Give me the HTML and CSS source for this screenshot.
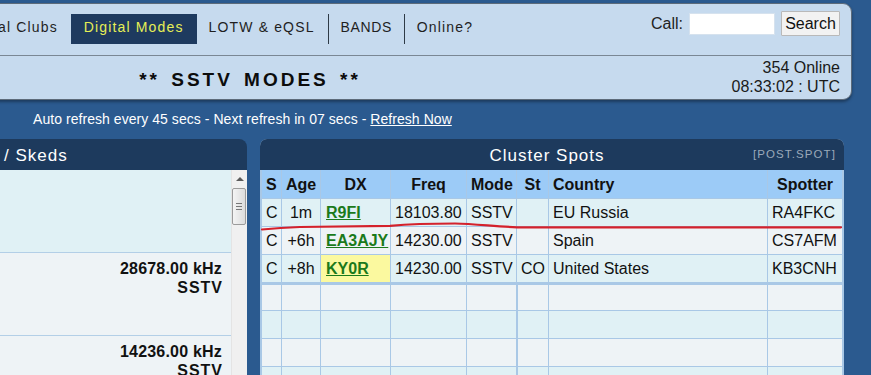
FILE: index.html
```html
<!DOCTYPE html>
<html>
<head>
<meta charset="utf-8">
<link rel="stylesheet" href="styles.css">
</head>
<body>
<div class="page">
  <div class="header">
    <div class="navrow">
      <ul class="nav">
        <li class="item">Local Clubs</li>
        <li class="item active">Digital Modes</li>
        <li class="item">LOTW &amp; eQSL</li>
        <li class="item sep bands">BANDS</li>
        <li class="item sep">Online?</li>
      </ul>
      <form class="search">
        <label class="call">Call:</label>
        <input class="callbox" type="text">
        <button class="btn" type="button">Search</button>
      </form>
    </div>
    <div class="inforow">
      <div class="title">** SSTV MODES **</div>
      <div class="status">
        <div>354 Online</div>
        <div>08:33:02 : UTC</div>
      </div>
    </div>
  </div>

  <div class="refresh">Auto refresh every 45 secs - Next refresh in 07 secs - <a class="reflink" href="#">Refresh Now</a></div>

  <div class="panels">
    <div class="panel left">
      <div class="phead lefthead">/ Skeds</div>
      <div class="lbody">
        <div class="lrows">
          <div class="lrow cyan"></div>
          <div class="lrow grey"><div class="freq">28678.00 kHz</div><div class="mode">SSTV</div></div>
          <div class="lrow grey"><div class="freq">14236.00 kHz</div><div class="mode">SSTV</div></div>
        </div>
        <div class="scrollbar">
          <div class="arrow"></div>
          <div class="thumb"><span></span><span></span><span></span></div>
        </div>
      </div>
    </div>

    <div class="panel right">
      <div class="phead righthead">
        <span></span>
        <span class="ptitle">Cluster Spots</span>
        <span class="post">[POST.SPOT]</span>
      </div>
      <table class="spots">
        <colgroup>
          <col class="c-s"><col class="c-age"><col class="c-dx"><col class="c-freq"><col class="c-mode"><col class="c-st"><col class="c-country"><col class="c-spotter">
        </colgroup>
        <thead>
          <tr><th class="l">S</th><th>Age</th><th>DX</th><th>Freq</th><th>Mode</th><th>St</th><th class="l">Country</th><th>Spotter</th></tr>
        </thead>
        <tbody>
          <tr class="cyan"><td>C</td><td class="c">1m</td><td><a class="dx" href="#">R9FI</a></td><td>18103.80</td><td>SSTV</td><td></td><td>EU Russia</td><td>RA4FKC</td></tr>
          <tr class="grey"><td>C</td><td class="c">+6h</td><td><a class="dx" href="#">EA3AJY</a></td><td>14230.00</td><td>SSTV</td><td></td><td>Spain</td><td>CS7AFM</td></tr>
          <tr class="cyan"><td>C</td><td class="c">+8h</td><td class="hl"><a class="dx" href="#">KY0R</a></td><td>14230.00</td><td>SSTV</td><td>CO</td><td>United States</td><td>KB3CNH</td></tr>
          <tr class="grey empty first"><td></td><td></td><td></td><td></td><td></td><td class="thick"></td><td></td><td></td></tr>
          <tr class="cyan empty"><td></td><td></td><td></td><td></td><td></td><td class="thick"></td><td></td><td></td></tr>
          <tr class="grey empty"><td></td><td></td><td></td><td></td><td></td><td class="thick"></td><td></td><td></td></tr>
          <tr class="cyan empty"><td></td><td></td><td></td><td></td><td></td><td class="thick"></td><td></td><td></td></tr>
        </tbody>
      </table>
    </div>
  </div>

  <svg class="annot" width="871" height="375" viewBox="0 0 871 375">
    <path d="M262,229.5 Q280,227.6 300,227 L390,225.8 C405,224.5 430,223.5 455,223.5 C475,223.8 495,226.5 517,227.3 L841,227.3" fill="none" stroke="#d4212b" stroke-width="2.2" stroke-linecap="round"/>
  </svg>
</div>
</body>
</html>
```

FILE: styles.css
```css
* { box-sizing: border-box; }
html, body { margin: 0; padding: 0; }
body {
  background: #2b5a8f;
  font-family: "Liberation Sans", Arial, sans-serif;
  width: 871px;
  height: 375px;
  overflow: hidden;
}
.page { position: relative; width: 871px; height: 375px; padding-top: 3px; }

.header {
  margin-left: -45px;
  width: 897px;
  height: 97px;
  background: #c6daee;
  border: 1px solid #5d6b7a;
  border-radius: 0 9px 9px 0;
  box-shadow: 0 2px 3px rgba(0,0,0,0.35);
}
.navrow {
  display: flex;
  height: 52px;
  border-bottom: 1px solid #7a8794;
}
.nav {
  list-style: none;
  margin: 0;
  padding: 10px 0 0 4px;
  display: flex;
  align-items: flex-start;
}
.item {
  height: 30px;
  line-height: 27px;
  padding: 0 13px 0 12px;
  font-size: 14px;
  letter-spacing: 1.15px;
  color: #1f1f1f;
}
.item.active {
  background: #1e3a5f;
  color: #e6ef55;
  padding: 0 13px;
}
.item.sep { border-left: 1px solid #2e3a46; }
.item.bands { letter-spacing: 0.6px; padding-right: 12px; }

.search {
  margin: 0 0 0 auto;
  padding: 7px 11px 0 0;
  display: flex;
  align-items: flex-start;
}
.call {
  font-size: 16px;
  color: #222;
  line-height: 19px;
  margin-top: 3px;
  margin-right: 6px;
}
.callbox {
  width: 86px;
  height: 22px;
  margin: 2px 6px 0 0;
  border: 1px solid #d6e2ee;
  background: #fff;
  padding: 0;
}
.btn {
  width: 59px;
  height: 25px;
  margin: 0;
  padding: 0;
  font-family: "Liberation Sans", Arial, sans-serif;
  font-size: 16px;
  color: #111;
  background: #f2f2f2;
  border: 1px solid #b9b9b9;
  border-radius: 1px;
}

.inforow {
  display: flex;
  height: 43px;
}
.title {
  width: 588px;
  text-align: center;
  font-weight: bold;
  font-size: 19px;
  letter-spacing: 3px;
  word-spacing: 3px;
  color: #0c0c0c;
  padding-top: 13px;
}
.status {
  margin-left: auto;
  padding: 2px 11px 0 0;
  text-align: right;
  font-size: 16px;
  line-height: 19px;
  color: #1a1a1a;
}

.refresh {
  height: 39px;
  line-height: 39px;
  padding-left: 33px;
  font-size: 14px;
  letter-spacing: 0.05px;
  color: #fff;
}
.reflink { color: #fff; text-decoration: underline; }

.panels {
  display: flex;
  gap: 13px;
  align-items: flex-start;
}
.panel { overflow: hidden; }
.left {
  width: 247px;
  border-radius: 0 8px 0 0;
}
.right {
  width: 584px;
  border-radius: 7px 7px 0 0;
  background: #a9c8e6;
  padding: 0 1px;
}
.phead {
  height: 31px;
  background: #1d3a5d;
  color: #fff;
  font-size: 17px;
  letter-spacing: 1px;
  line-height: 33px;
}
.lefthead { padding-left: 4px; }
.righthead {
  display: grid;
  grid-template-columns: 1fr auto 1fr;
  margin: 0 -1px;
  padding: 0 8px 0 0;
}
.ptitle { padding-right: 2px; }
.post {
  justify-self: end;
  font-size: 11.5px;
  color: #9aa9ba;
  letter-spacing: 1.1px;
  line-height: 30px;
}

.lbody { display: flex; height: 210px; }
.lrows { width: 231px; }
.lrow {
  height: 83px;
  border-bottom: 1px solid #b3cfe7;
  text-align: right;
  padding: 6px 9px 0 0;
  font-weight: bold;
  font-size: 16px;
  line-height: 19px;
  color: #111;
}
.lrow.cyan { background: #e0f1f5; }
.lrow.grey { background: #eef3f6; }
.freq { letter-spacing: 0.2px; }
.mode { letter-spacing: 1px; margin-right: -1px; }

.scrollbar {
  width: 16px;
  background: #f0f0f0;
  border-left: 1px solid #e4e4e4;
  padding-top: 7px;
}
.arrow {
  width: 0; height: 0;
  margin: 0 auto;
  border-left: 4px solid transparent;
  border-right: 4px solid transparent;
  border-bottom: 4px solid #5a5a5a;
}
.thumb {
  margin: 7px 0 0 0;
  width: 14px;
  height: 37px;
  background: linear-gradient(to right, #f4f4f4, #dcdcdc);
  border: 1px solid #9b9b9b;
  border-radius: 2px;
  padding-top: 14px;
}
.thumb span {
  display: block;
  width: 6px;
  height: 1px;
  background: #777;
  margin: 0 auto 2px;
}

.spots {
  border-collapse: separate;
  border-spacing: 0;
  table-layout: fixed;
  width: 582px;
  border-left: 1px solid #a9c8e6;
  font-size: 16px;
  color: #111;
}
.c-s { width: 20px; }
.c-age { width: 39px; }
.c-dx { width: 70px; }
.c-freq { width: 76px; }
.c-mode { width: 50px; }
.c-st { width: 32px; }
.c-country { width: 219px; }
.c-spotter { width: 75px; }
.spots th, .spots td {
  border-right: 1px solid #a9c8e6;
  border-bottom: 1px solid #a9c8e6;
  padding: 0 4px;
  white-space: nowrap;
  overflow: hidden;
}
.spots th {
  height: 29px;
  padding-top: 1px;
  background: #9ccbf7;
  font-weight: bold;
  text-align: center;
  line-height: 27px;
}
.spots th.l { text-align: left; }
.spots td { height: 28px; padding-top: 1px; line-height: 26px; text-align: left; }
.spots td.c { text-align: center; }
.spots tr.cyan td { background: #e0f1f5; }
.spots tr.grey td { background: #eef3f6; }
.spots td.hl { background: #fbf99f !important; }
.dx {
  color: #1b7a1b;
  font-weight: bold;
  text-decoration: underline;
  padding-left: 1px;
}
.spots tr.first td { border-top: 2px solid #a9c8e6; }
.spots td.thick { border-left: 1px solid #a9c8e6; }

.annot {
  position: absolute;
  left: 0;
  top: 0;
  pointer-events: none;
}
```
